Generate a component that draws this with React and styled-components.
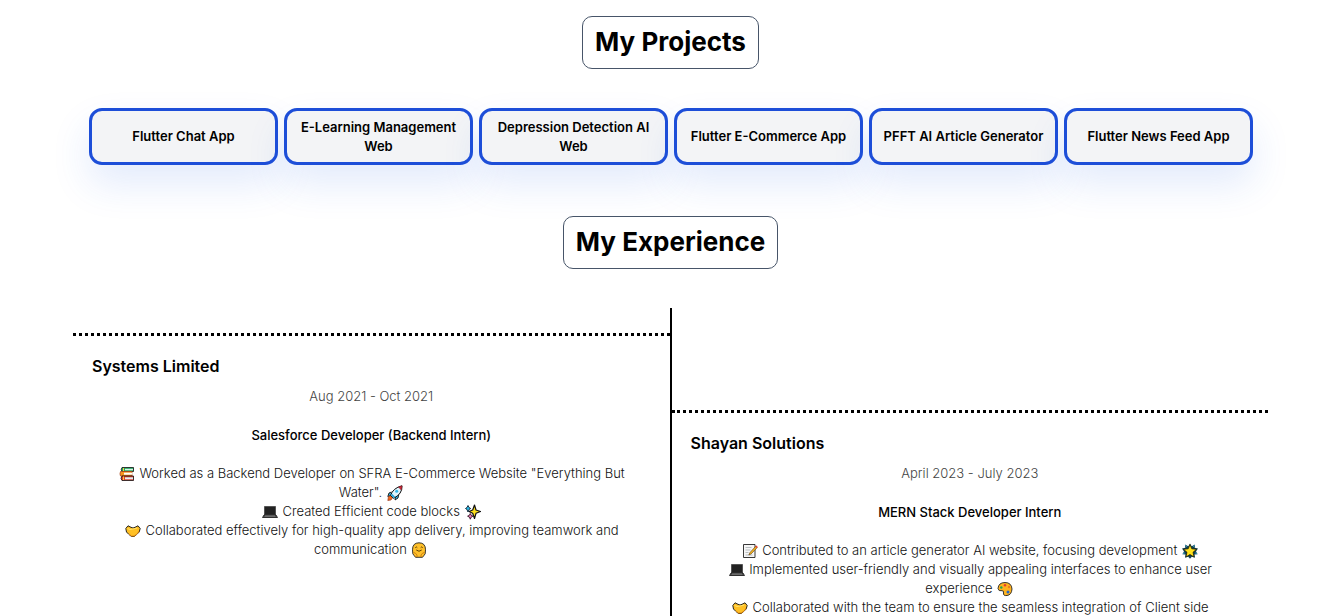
import React from "react";
import styled, { createGlobalStyle } from "styled-components";

const GlobalStyle = createGlobalStyle`
  *, *::before, *::after { box-sizing: border-box; }
  body {
    margin: 0;
    background: #fff;
    color: #000;
    font-family: Inter, "Liberation Sans", sans-serif;
    font-size: 13px;
    line-height: 19px;
  }
  h2, h3, h4, p, ul { margin: 0; padding: 0; }
`;

const Page = styled.main`
  padding: 16px 72px 0 73px;
`;

const HeadingRow = styled.header`
  display: flex;
  justify-content: center;
`;

const Heading = styled.h2`
  position: relative;
  padding: 9px 12px 10px;
  border: 1px solid #475569;
  border-radius: 10px;
  background: #fff;
  font-size: 26px;
  line-height: 32px;
  font-weight: 700;
`;

const ProjectGrid = styled.nav`
  display: grid;
  grid-template-columns: repeat(6, 1fr);
  gap: 6px;
  padding: 39px 15px 51px 16px;
`;

const ProjectButton = styled.button`
  min-height: 57px;
  padding: 6px 8px;
  border: 3px solid #1d4ed8;
  border-radius: 13px;
  background: #f3f4f6;
  box-shadow: 0 19px 38px rgba(37, 99, 235, 0.13);
  color: #000;
  font: inherit;
  font-weight: 600;
  text-align: center;
  cursor: pointer;
`;

const Timeline = styled.section`
  display: grid;
  grid-template-columns: 1fr 2px 1fr;
  margin-top: 39px;
`;

const Divider = styled.div`
  background: #000;
`;

const Job = styled.article`
  margin-top: ${({ $drop }) => $drop}px;
  border-top: 3px dotted #000;
  padding-top: 20px;
  text-align: center;
`;

const Company = styled.h3`
  padding: 0 19px;
  font-size: 16px;
  line-height: 20px;
  font-weight: 600;
  text-align: left;
`;

const Period = styled.p`
  margin-top: 11px;
  color: #444;
  font-weight: 300;
`;

const Role = styled.h4`
  margin: 20px 0 19px;
  font-size: 13px;
  font-weight: 500;
`;

const Duties = styled.ul`
  padding: 0 38px;
  list-style: none;
  color: #111;
  font-weight: 300;
`;

const EmojiSvg = styled.svg`
  width: 16px;
  height: 16px;
  margin: 0 1px;
  vertical-align: -4px;
`;

const Drawings = {
  books: (
    <>
      <path d="M3 1.500h11.500v4H3q-1.500-2 0-4z" fill="#1fa65f" stroke="#111" strokeWidth=".8" />
      <path d="M6 2.800h8v1.500H6z" fill="#d9f3e4" />
      <path d="M1.500 5.500h11.500v4.500H1.500q-1-2 0-4.500z" fill="#f7941d" stroke="#a8451a" strokeWidth=".8" />
      <path d="M5 6.700h8.500v2H5z" fill="#fff" />
      <path d="M3 10h11.500v4.500H3q-2-2.200 0-4.500z" fill="#e23b2e" stroke="#111" strokeWidth=".8" />
      <path d="M6 11.300h8v2H6z" fill="#dff1f5" />
      <path d="M4.500 2v3M4.500 10.500v3.500" stroke="#ffd23e" />
    </>
  ),
  rocket: (
    <>
      <path d="M4.500 7L2 8l-1.200 3.500L4 10.500M8.500 11.500l-.5 3.500 3-2 .8-3.500" fill="#36b5e5" stroke="#111" strokeWidth=".9" />
      <path d="M.8 15.500l.7-4 2.500-1 1.700 2L4 15z" fill="#f06a1d" stroke="#8d2a12" strokeWidth=".6" />
      <path d="M3.500 10.500Q6 3 15 .8q.5 8.200-8.500 12.500z" fill="#dff3fb" stroke="#111" />
      <path d="M11.500 2L15 .8l-.8 4.200z" fill="#d92635" stroke="#7d1420" strokeWidth=".5" />
      <circle cx="9.700" cy="6.300" r="1.500" fill="#36b5e5" />
      <path d="M4.500 9.500l3 3" stroke="#29a7dc" strokeWidth="1.800" />
    </>
  ),
  laptop: (
    <>
      <path d="M2.500 2.500h11v8.500h-11z" fill="#222" stroke="#555" />
      <path d="M2 11h12l1.500 2.500H.5z" fill="#555" stroke="#111" strokeWidth=".8" />
      <path d="M3 12h10" stroke="#999" strokeWidth=".7" />
    </>
  ),
  sparkles: (
    <>
      <path d="M9.500 1l1.500 5 4.500 1.500L11 9.300l-1.500 5.200L7.700 9.300 4 7.500l3.700-1.500z" fill="#ffe11c" stroke="#111" strokeWidth="1.200" strokeLinejoin="round" />
      <path d="M3 1.500l1 2 1.700 1-1.700 1L3 8 2 5.500.5 4.500 2 3.500z" fill="#28b9e8" stroke="#123" strokeWidth=".9" />
      <path d="M5.300 9.500l.9 1.800 1.700.9-1.700.9-.9 2.100-.9-2.100-1.800-.9 1.800-.9z" fill="#ef7ab8" stroke="#312" strokeWidth=".9" />
    </>
  ),
  hands: (
    <>
      <path d="M.8 5.500L3 2.800l3 1.500 2 .7 2-.7 3-1.500 2.200 2.700-1 3.500-2.500 2.500-2.500 2H6.500L4 11.500 1.500 9z" fill="#ffc024" stroke="#111" strokeWidth=".9" strokeLinejoin="round" />
      <path d="M4 11l2.500 2h3l3-2.500 1.500-2.500" fill="none" stroke="#e58a12" />
      <path d="M2.500 5.500L5 6.500l3-.5 4-1" fill="none" stroke="#ffe36b" />
    </>
  ),
  hug: (
    <>
      <path d="M8 .8q6.500 0 6.500 7l-.3 4-2.700 3.500h-7L1.800 11.800l-.3-4q0-7 6.500-7z" fill="#ffc02a" stroke="#222" strokeWidth=".9" />
      <path d="M4.300 5.700q1-1.500 2 0M9.700 5.700q1-1.500 2 0M5.300 8q2.700 2.500 5.400 0" fill="none" stroke="#4b3100" strokeWidth=".9" />
      <path d="M2.500 10.500q2 0 3.500 2.500v2M13.500 10.500q-2 0-3.500 2.500v2M3.500 13.500l1 1M12.500 13.500l-1 1" fill="none" stroke="#c97a0c" strokeWidth=".9" />
    </>
  ),
  memo: (
    <>
      <path d="M1.500 1.500h11.500v13H1.500z" fill="#f6f6f6" stroke="#222" strokeWidth=".9" />
      <path d="M3.500 4.500h6M3.500 7h5M3.500 9.500h3M3.500 12h7" stroke="#aab0b4" strokeWidth=".8" />
      <path d="M14 3L8 9.500l-1.200 2.500 2.200-1L15.300 4.500z" fill="#f6b51e" stroke="#593b12" strokeWidth=".6" />
      <path d="M13.300 3.800l1-1.200q1.300 0 1.200 1.500l-1 1z" fill="#e83f37" />
    </>
  ),
  star: (
    <>
      <path d="M8 .5l1.700 2.700L13 1.500l-.3 3.300 3.300.7L14 8.500l1.700 2.800-3.200.3.5 3.200-3.200-1L8 15.700l-1.800-1.900-3.200 1 .5-3.200-3.200-.3L2 8.500 0 5.500l3.300-.7L3 1.500l3.300 1.700z" fill="#124050" />
      <path d="M8 1.500l1.800 4.300 4.700.5-3.500 3 1.100 4.700L8 11.500 3.900 14 5 9.300l-3.500-3 4.700-.5z" fill="#ffe11c" stroke="#171400" strokeWidth=".7" />
      <path d="M3.300 2.200l1.700 1.700M12.700 2.200L11 3.900M1 10.500l1.800-.5M15 10.500l-1.800-.5" stroke="#36b9df" strokeWidth=".8" />
    </>
  ),
  palette: (
    <>
      <path d="M1 7.500Q1.500 1.500 8 1.500q6.500 0 7 6.500-.5 6-5 6.500-4 .5-3.500-2.500.5-2.500-1.500-2.300Q1.500 10.500 1 7.500z" fill="#ffb31f" stroke="#222" strokeWidth=".9" />
      <circle cx="4.300" cy="6.500" r="1.200" fill="#23a455" />
      <circle cx="8" cy="4.200" r="1.200" fill="#e23b2e" />
      <circle cx="12" cy="6" r="1.200" fill="#ef7c20" />
      <circle cx="11" cy="11" r="1.500" fill="#2467c8" />
    </>
  ),
};

const Emoji = ({ name }) => (
  <EmojiSvg viewBox="0 0 16 16" role="img" aria-label={name} fill="none">
    {Drawings[name]}
  </EmojiSvg>
);

const projects = [
  "Flutter Chat App",
  "E-Learning Management Web",
  "Depression Detection AI Web",
  "Flutter E-Commerce App",
  "PFFT AI Article Generator",
  "Flutter News Feed App",
];

const jobs = [
  {
    company: "Systems Limited",
    period: "Aug 2021 - Oct 2021",
    role: "Salesforce Developer (Backend Intern)",
    drop: 25,
    duties: [
      ["books", 'Worked as a Backend Developer on SFRA E-Commerce Website "Everything But Water".', "rocket"],
      ["laptop", "Created Efficient code blocks", "sparkles"],
      ["hands", "Collaborated effectively for high-quality app delivery, improving teamwork and communication", "hug"],
    ],
  },
  {
    company: "Shayan Solutions",
    period: "April 2023 - July 2023",
    role: "MERN Stack Developer Intern",
    drop: 102,
    duties: [
      ["memo", "Contributed to an article generator AI website, focusing development", "star"],
      ["laptop", "Implemented user-friendly and visually appealing interfaces to enhance user experience", "palette"],
      ["hands", "Collaborated with the team to ensure the seamless integration of Client side"],
    ],
  },
];

const JobEntry = ({ job }) => (
  <Job $drop={job.drop}>
    <Company>{job.company}</Company>
    <Period>{job.period}</Period>
    <Role>{job.role}</Role>
    <Duties>
      {job.duties.map(([lead, text, tail]) => (
        <li key={text}>
          <Emoji name={lead} /> {text} {tail && <Emoji name={tail} />}
        </li>
      ))}
    </Duties>
  </Job>
);

export default function App() {
  return (
    <>
      <GlobalStyle />
      <Page>
        <HeadingRow>
          <Heading>My Projects</Heading>
        </HeadingRow>
        <ProjectGrid aria-label="Projects">
          {projects.map((name) => (
            <ProjectButton key={name} type="button">{name}</ProjectButton>
          ))}
        </ProjectGrid>
        <HeadingRow>
          <Heading>My Experience</Heading>
        </HeadingRow>
        <Timeline>
          <JobEntry job={jobs[0]} />
          <Divider />
          <JobEntry job={jobs[1]} />
        </Timeline>
      </Page>
    </>
  );
}
